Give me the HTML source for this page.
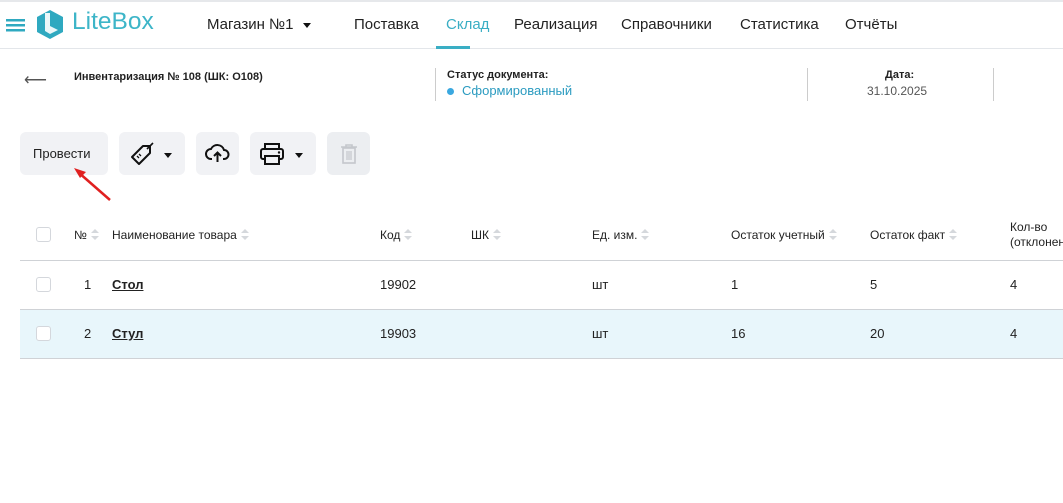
<!DOCTYPE html>
<html><head><meta charset="utf-8"><style>
*{margin:0;padding:0;box-sizing:border-box}
body{width:1063px;height:503px;overflow:hidden;background:#fff;font-family:"Liberation Sans",sans-serif;color:#222;position:relative}
.a{position:absolute;white-space:nowrap}
.nav{font-size:15px;top:16px;color:#222}
.btn{position:absolute;top:132px;height:43px;background:#f1f2f5;border-radius:6px}
.th{font-size:12px;top:228px;color:#222}
.s{display:inline-block;width:8px;height:12px;vertical-align:-2px;margin-left:4px;position:relative}
.s:before,.s:after{content:"";position:absolute;left:0;border-left:4px solid transparent;border-right:4px solid transparent}
.s:before{top:0;border-bottom:4px solid #d5d8dc}
.s:after{top:7px;border-top:4px solid #d5d8dc}
.cb{position:absolute;left:36px;width:15px;height:15px;border:1.5px solid #d4d7dc;border-radius:3px;background:#fff}
.td{font-size:13px;position:absolute;white-space:nowrap}
.hl{position:absolute;left:20px;right:0;height:1px;background:#cfd2d6}
.car{position:absolute;top:21px;width:0;height:0;border-left:4.5px solid transparent;border-right:4.5px solid transparent;border-top:5px solid #111}
</style></head><body>
<div class="a" style="left:0;top:0;width:1063px;height:2px;background:#e6e8eb"></div>
<div class="a" style="left:0;top:48px;width:1063px;height:1px;background:#e3e6ea"></div>
<svg class="a" style="left:6px;top:18px" width="20" height="14"><rect y="1" width="19" height="2.5" fill="#2fa9c0"/><rect y="6" width="19" height="2.5" fill="#2fa9c0"/><rect y="11" width="19" height="2.5" fill="#2fa9c0"/></svg>
<svg class="a" style="left:35px;top:9px" width="30" height="31" viewBox="0 0 30 31"><path d="M15 1 L28 8 L28 23 L15 30 L2 23 L2 8 Z" fill="#2fa9c0"/><path d="M10 4 L15 4 L15 17 L23 21 L15 25 L10 22 Z" fill="#fff" opacity=".9"/></svg>
<div class="a" style="left:72px;top:8px;font-size:24.5px;color:#3db5c8">LiteBox</div>
<div class="a nav" style="left:207px">Магазин №1</div>
<div class="car" style="left:303px;top:23px"></div>
<div class="a nav" style="left:354px">Поставка</div>
<div class="a nav" style="left:446px;color:#3aaec4">Склад</div>
<div class="a" style="left:436px;top:46px;width:34px;height:3px;background:#3aaec4"></div>
<div class="a nav" style="left:514px">Реализация</div>
<div class="a nav" style="left:621px">Справочники</div>
<div class="a nav" style="left:740px">Статистика</div>
<div class="a nav" style="left:845px">Отчёты</div>

<div class="a" style="left:24px;top:70px;font-size:16px;color:#555">⟵</div>
<div class="a" style="left:74px;top:71px;font-size:11px;font-weight:bold">Инвентаризация № 108 (ШК: О108)</div>
<div class="a" style="left:435px;top:68px;width:1px;height:33px;background:#ccc"></div>
<div class="a" style="left:447px;top:69px;font-size:11px;font-weight:bold">Статус документа:</div>
<div class="a" style="left:447px;top:88px;width:7px;height:7px;border-radius:50%;background:#3aa8e0"></div>
<div class="a" style="left:462px;top:83px;font-size:13px;color:#2b9bc0">Сформированный</div>
<div class="a" style="left:807px;top:68px;width:1px;height:33px;background:#ccc"></div>
<div class="a" style="left:885px;top:69px;font-size:11px;font-weight:bold">Дата:</div>
<div class="a" style="left:867px;top:84px;font-size:12px;color:#555">31.10.2025</div>
<div class="a" style="left:993px;top:68px;width:1px;height:33px;background:#ccc"></div>

<div class="btn" style="left:20px;width:88px"><div class="a" style="left:13px;top:14px;font-size:13px">Провести</div></div>
<div class="btn" style="left:119px;width:66px"><svg class="a" style="left:9px;top:8px" width="28" height="28" viewBox="0 0 28 28"><path d="M15 6 L22 6 L22 13 L11 24 L4 17 Z" fill="none" stroke="#111" stroke-width="2" stroke-linejoin="round"/><path d="M19 9 L25 3" stroke="#111" stroke-width="1.6"/><path d="M9 16 L11 18 M11 14 L13 16" stroke="#111" stroke-width="1.3"/></svg><div class="car" style="left:45px"></div></div>
<div class="btn" style="left:196px;width:43px"><svg class="a" style="left:9px;top:10px" width="25" height="22" viewBox="0 0 25 22"><path d="M7 17 H6 a5 5 0 0 1 0-10 a7 7 0 0 1 13 1 a4.5 4.5 0 0 1 0 9 h-1" fill="none" stroke="#111" stroke-width="2"/><path d="M12.5 20 V11 M9 14 L12.5 10.5 L16 14" fill="none" stroke="#111" stroke-width="2"/></svg></div>
<div class="btn" style="left:250px;width:66px"><svg class="a" style="left:9px;top:10px" width="26" height="24" viewBox="0 0 26 24"><rect x="6" y="2" width="14" height="5" fill="none" stroke="#111" stroke-width="2"/><rect x="2" y="7" width="22" height="10" rx="2" fill="none" stroke="#111" stroke-width="2"/><rect x="6" y="14" width="14" height="8" fill="#f1f2f5" stroke="#111" stroke-width="2"/><circle cx="20" cy="10.5" r="1.2" fill="#111"/></svg><div class="car" style="left:45px"></div></div>
<div class="btn" style="left:327px;width:43px;background:#eceef1"><svg class="a" style="left:13px;top:12px" width="18" height="20" viewBox="0 0 18 20"><path d="M1 3 H17 M6 3 V1 H12 V3" fill="none" stroke="#c4c7cc" stroke-width="1.6"/><rect x="3" y="4" width="12" height="15" fill="none" stroke="#c4c7cc" stroke-width="1.6"/><path d="M7 7 V16 M9 7 V16 M11 7 V16" stroke="#c4c7cc" stroke-width="1.2"/></svg></div>

<svg class="a" style="left:70px;top:164px" width="45" height="40"><path d="M40 36 L8 8" stroke="#e02020" stroke-width="2.5"/><path d="M4 4 L16 8 L10 14 Z" fill="#e02020"/></svg>

<div class="cb" style="top:227px"></div>
<div class="a th" style="left:74px">№<span class="s"></span></div>
<div class="a th" style="left:112px">Наименование товара<span class="s"></span></div>
<div class="a th" style="left:380px">Код<span class="s"></span></div>
<div class="a th" style="left:471px">ШК<span class="s"></span></div>
<div class="a th" style="left:592px">Ед. изм.<span class="s"></span></div>
<div class="a th" style="left:731px">Остаток учетный<span class="s"></span></div>
<div class="a th" style="left:870px">Остаток факт<span class="s"></span></div>
<div class="a" style="left:1010px;top:220px;font-size:12px;line-height:15px">Кол-во<br>(отклонение)</div>
<div class="hl" style="top:260px"></div>
<div class="a" style="left:20px;top:310px;right:0;height:48px;background:#e8f6fb"></div>
<div class="hl" style="top:309px"></div>
<div class="hl" style="top:358px"></div>

<div class="cb" style="top:277px"></div>
<div class="td" style="left:84px;top:277px">1</div>
<div class="td" style="left:112px;top:277px;font-weight:bold;text-decoration:underline">Стол</div>
<div class="td" style="left:380px;top:277px">19902</div>
<div class="td" style="left:592px;top:277px">шт</div>
<div class="td" style="left:731px;top:277px">1</div>
<div class="td" style="left:870px;top:277px">5</div>
<div class="td" style="left:1010px;top:277px">4</div>

<div class="cb" style="top:326px"></div>
<div class="td" style="left:84px;top:326px">2</div>
<div class="td" style="left:112px;top:326px;font-weight:bold;text-decoration:underline">Стул</div>
<div class="td" style="left:380px;top:326px">19903</div>
<div class="td" style="left:592px;top:326px">шт</div>
<div class="td" style="left:731px;top:326px">16</div>
<div class="td" style="left:870px;top:326px">20</div>
<div class="td" style="left:1010px;top:326px">4</div>
</body></html>
